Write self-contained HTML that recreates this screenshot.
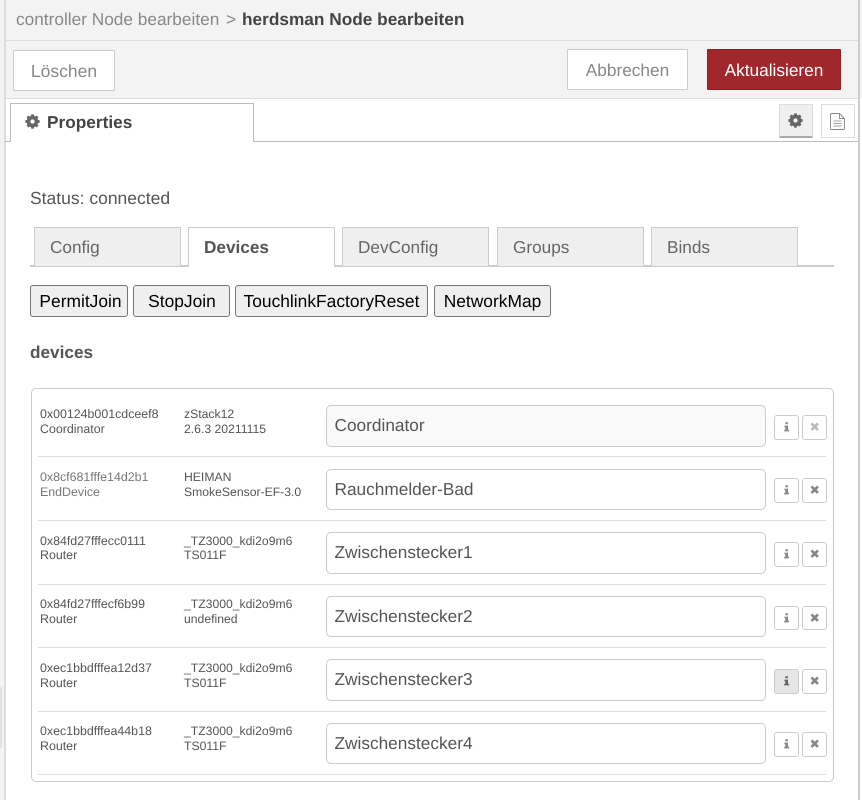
<!DOCTYPE html>
<html><head><meta charset="utf-8"><style>
html,body{margin:0;padding:0;background:#fff}
body{width:862px;height:800px;overflow:hidden;position:relative;font-family:"Liberation Sans",sans-serif;color:#555;text-rendering:geometricPrecision}
.a,.t,.btn,.tab,.nb,.in,.sb,.sep,.l{position:absolute;box-sizing:border-box}
.t{white-space:nowrap}
.btn{background:#fff;border:1.5px solid #ccc;border-radius:1px;color:#888;font-size:17.25px;text-align:center;height:41px;line-height:40px}
.tab{top:227px;height:39px;width:147px;background:#efefef;border:1.5px solid #ccc;border-bottom:none;color:#666;font-size:17.2px;line-height:38px;padding-left:15px}
.nb{top:285px;height:32px;background:#efefef;border:1.2px solid #767676;border-radius:3px;color:#000;font-size:17.4px;line-height:30px;text-align:center;white-space:nowrap}
.in{left:326px;width:440px;height:41.5px;border:1.3px solid #ccc;border-radius:5px;background:#fff;color:#555;font-size:17.25px;line-height:39px;padding-left:7.5px}
.sb{width:25px;height:24.5px;border:1.3px solid #ccc;border-radius:3px;background:#fff}
.sb svg{position:absolute;left:5.5px;top:5px}
.sep{left:38px;width:788px;height:1.2px;background:#ddd}
.l{font-size:12.2px;line-height:14.5px;color:#555;white-space:nowrap}
.m{font-size:12.4px}
</style></head><body>
<div class="a" style="left:0;top:0;width:862px;height:98px;background:#f3f3f3"></div>
<div class="a" style="left:0;top:98px;width:4px;height:702px;background:#f3f3f3"></div>
<div class="a" style="left:0;top:687px;width:2px;height:61px;background:#e2e2e2"></div>
<div class="a" style="left:4px;top:0;width:1.5px;height:800px;background:#ddd"></div>
<div class="a" style="left:858px;top:0;width:1.5px;height:800px;background:#ccc"></div>
<div class="a" style="left:5px;top:40px;width:853px;height:1.2px;background:#ddd"></div>
<div class="a" style="left:5px;top:98px;width:853px;height:1.2px;background:#ddd"></div>

<div class="t" style="left:16px;top:9px;font-size:17.25px;line-height:20px;color:#888">controller Node bearbeiten</div>
<div class="t" style="left:226px;top:9px;font-size:17.25px;line-height:20px;color:#888">&gt;</div>
<div class="t" style="left:242px;top:9px;font-size:17.25px;line-height:20px;font-weight:bold;color:#444">herdsman Node bearbeiten</div>

<div class="btn" style="left:13px;top:50px;width:102px;font-size:17.5px">Löschen</div>
<div class="btn" style="left:567px;top:49px;width:121px">Abbrechen</div>
<div class="btn" style="left:707px;top:49px;width:134px;background:#a0272c;border-color:#8f2025;color:#fff">Aktualisieren</div>

<div class="a" style="left:5px;top:141px;width:853px;height:1.3px;background:#bbb"></div>
<div class="a" style="left:10px;top:103px;width:244px;height:39px;background:#fff;border:1.3px solid #bbb;border-bottom:none"></div>
<svg class="a" style="left:25px;top:114px" width="15" height="15" viewBox="-8 -8 16 16"><g fill="#666"><circle r="4.6" fill="none" stroke="#666" stroke-width="3.2"/><rect x="-1.6" y="-7.6" width="3.2" height="15.2" rx=".5"/><rect x="-1.6" y="-7.6" width="3.2" height="15.2" rx=".5" transform="rotate(45)"/><rect x="-1.6" y="-7.6" width="3.2" height="15.2" rx=".5" transform="rotate(90)"/><rect x="-1.6" y="-7.6" width="3.2" height="15.2" rx=".5" transform="rotate(135)"/></g><circle r="2.3" fill="#fff"/></svg>
<div class="t" style="left:47px;top:112px;font-size:17.25px;line-height:20px;font-weight:bold;color:#444">Properties</div>

<div class="a" style="left:779px;top:104px;width:34px;height:34px;background:#efefef;border:1.2px solid #ddd;border-bottom:2px solid #aaa"></div>
<svg class="a" style="left:788px;top:113px" width="15" height="15" viewBox="-8 -8 16 16"><g fill="#666"><circle r="4.6" fill="none" stroke="#666" stroke-width="3.2"/><rect x="-1.6" y="-7.6" width="3.2" height="15.2" rx=".5"/><rect x="-1.6" y="-7.6" width="3.2" height="15.2" rx=".5" transform="rotate(45)"/><rect x="-1.6" y="-7.6" width="3.2" height="15.2" rx=".5" transform="rotate(90)"/><rect x="-1.6" y="-7.6" width="3.2" height="15.2" rx=".5" transform="rotate(135)"/></g><circle r="2.3" fill="#efefef"/></svg>
<div class="a" style="left:821px;top:104px;width:34px;height:34px;background:#fff;border:1.2px solid #ddd"></div>
<svg class="a" style="left:830px;top:113px" width="15" height="17" viewBox="0 0 15 17"><path d="M1.500.5h8l5 5v10a1 1 0 0 1-1 1h-12a1 1 0 0 1-1-1v-14a1 1 0 0 1 1-1z M9.500.5v5h5" fill="none" stroke="#888" stroke-width=".9"/><path d="M3.500 8h8 M3.500 10.500h8 M3.500 13h8" fill="none" stroke="#888" stroke-width=".8"/></svg>

<div class="t" style="left:30px;top:187.500px;font-size:17.5px;line-height:20px;color:#555">Status: connected</div>

<div class="a" style="left:30px;top:265px;width:804px;height:1.5px;background:#ccc"></div>
<div class="tab" style="left:34px">Config</div>
<div class="tab" style="left:188px;height:40px;background:#fff;font-weight:bold;color:#555">Devices</div>
<div class="tab" style="left:342px">DevConfig</div>
<div class="tab" style="left:497px">Groups</div>
<div class="tab" style="left:651px">Binds</div>

<div class="nb" style="left:30px;width:98px;padding-left:3px">PermitJoin</div>
<div class="nb" style="left:133px;width:97px;padding-left:1px">StopJoin</div>
<div class="nb" style="left:235px;width:193px">TouchlinkFactoryReset</div>
<div class="nb" style="left:434px;width:117px">NetworkMap</div>

<div class="t" style="left:30px;top:342px;font-size:17.2px;line-height:20px;font-weight:bold;color:#555">devices</div>

<div class="a" style="left:30.500px;top:387.500px;width:803.500px;height:394px;border:1.3px solid #ccc;border-radius:5px"></div>

<div class="l m" style="left:40px;top:407px">0x00124b001cdceef8<br>Coordinator</div>
<div class="l" style="left:184px;top:407px">zStack12<br>2.6.3 20211115</div>
<div class="in" style="top:405px;background:#f9f9f9">Coordinator</div>
<div class="sb" style="left:774px;top:415px"><svg width="13" height="14" viewBox="0 0 13 14"><path d="M4.300 1.300h2.600v2h-2.600z M3.400 4.600h3.600v4.200h1.200v1.600H3.200V8.800h1.100V6.200h-.9z" fill="#888"/></svg></div>
<div class="sb" style="left:802px;top:415px"><svg width="13" height="14" viewBox="0 0 13 14"><path d="M1.500 3.400l1.900-1.900 2.300 2.300 2.300-2.300 1.900 1.900-2.300 2.300 2.300 2.300-1.900 1.900-2.300-2.300-2.300 2.300-1.900-1.900 2.300-2.300z" fill="#bbb"/></svg></div>
<div class="sep" style="top:456px"></div>

<div class="l m" style="left:40px;top:470px;color:#777">0x8cf681fffe14d2b1<br>EndDevice</div>
<div class="l" style="left:184px;top:470px">HEIMAN<br>SmokeSensor-EF-3.0</div>
<div class="in" style="top:468.500px">Rauchmelder-Bad</div>
<div class="sb" style="left:774px;top:478px"><svg width="13" height="14" viewBox="0 0 13 14"><path d="M4.300 1.300h2.600v2h-2.600z M3.400 4.600h3.600v4.200h1.200v1.600H3.200V8.800h1.100V6.200h-.9z" fill="#888"/></svg></div>
<div class="sb" style="left:802px;top:478px"><svg width="13" height="14" viewBox="0 0 13 14"><path d="M1.500 3.400l1.900-1.900 2.300 2.300 2.300-2.300 1.900 1.900-2.300 2.300 2.300 2.300-1.900 1.900-2.300-2.300-2.300 2.300-1.900-1.900 2.300-2.300z" fill="#888"/></svg></div>
<div class="sep" style="top:520px"></div>

<div class="l m" style="left:40px;top:533.500px">0x84fd27fffecc0111<br>Router</div>
<div class="l" style="left:184px;top:533.500px">_TZ3000_kdi2o9m6<br>TS011F</div>
<div class="in" style="top:532px">Zwischenstecker1</div>
<div class="sb" style="left:774px;top:542px"><svg width="13" height="14" viewBox="0 0 13 14"><path d="M4.300 1.300h2.600v2h-2.600z M3.400 4.600h3.600v4.200h1.200v1.600H3.200V8.800h1.100V6.200h-.9z" fill="#888"/></svg></div>
<div class="sb" style="left:802px;top:542px"><svg width="13" height="14" viewBox="0 0 13 14"><path d="M1.500 3.400l1.900-1.900 2.300 2.300 2.300-2.300 1.900 1.900-2.300 2.300 2.300 2.300-1.900 1.900-2.300-2.300-2.300 2.300-1.900-1.900 2.300-2.300z" fill="#888"/></svg></div>
<div class="sep" style="top:583.500px"></div>

<div class="l m" style="left:40px;top:597px">0x84fd27fffecf6b99<br>Router</div>
<div class="l" style="left:184px;top:597px">_TZ3000_kdi2o9m6<br>undefined</div>
<div class="in" style="top:595.500px">Zwischenstecker2</div>
<div class="sb" style="left:774px;top:605.500px"><svg width="13" height="14" viewBox="0 0 13 14"><path d="M4.300 1.300h2.600v2h-2.600z M3.400 4.600h3.600v4.200h1.200v1.600H3.200V8.800h1.100V6.200h-.9z" fill="#888"/></svg></div>
<div class="sb" style="left:802px;top:605.500px"><svg width="13" height="14" viewBox="0 0 13 14"><path d="M1.500 3.400l1.900-1.900 2.300 2.300 2.300-2.300 1.900 1.900-2.300 2.300 2.300 2.300-1.900 1.900-2.300-2.300-2.300 2.300-1.900-1.900 2.300-2.300z" fill="#888"/></svg></div>
<div class="sep" style="top:647px"></div>

<div class="l m" style="left:40px;top:661px">0xec1bbdfffea12d37<br>Router</div>
<div class="l" style="left:184px;top:661px">_TZ3000_kdi2o9m6<br>TS011F</div>
<div class="in" style="top:659px">Zwischenstecker3</div>
<div class="sb" style="left:774px;top:669px;background:#e6e6e6"><svg width="13" height="14" viewBox="0 0 13 14"><path d="M4.300 1.300h2.600v2h-2.600z M3.400 4.600h3.600v4.200h1.200v1.600H3.200V8.800h1.100V6.200h-.9z" fill="#666"/></svg></div>
<div class="sb" style="left:802px;top:669px"><svg width="13" height="14" viewBox="0 0 13 14"><path d="M1.500 3.400l1.900-1.900 2.300 2.300 2.300-2.300 1.900 1.900-2.300 2.300 2.300 2.300-1.900 1.900-2.300-2.300-2.300 2.300-1.900-1.900 2.300-2.300z" fill="#888"/></svg></div>
<div class="sep" style="top:710.500px"></div>

<div class="l m" style="left:40px;top:724px">0xec1bbdfffea44b18<br>Router</div>
<div class="l" style="left:184px;top:724px">_TZ3000_kdi2o9m6<br>TS011F</div>
<div class="in" style="top:722.500px">Zwischenstecker4</div>
<div class="sb" style="left:774px;top:732px"><svg width="13" height="14" viewBox="0 0 13 14"><path d="M4.300 1.300h2.600v2h-2.600z M3.400 4.600h3.600v4.200h1.200v1.600H3.200V8.800h1.100V6.200h-.9z" fill="#888"/></svg></div>
<div class="sb" style="left:802px;top:732px"><svg width="13" height="14" viewBox="0 0 13 14"><path d="M1.500 3.400l1.900-1.900 2.300 2.300 2.300-2.300 1.900 1.900-2.300 2.300 2.300 2.300-1.900 1.900-2.300-2.300-2.300 2.300-1.900-1.900 2.300-2.300z" fill="#888"/></svg></div>
<div class="sep" style="top:774px"></div>
</body></html>
